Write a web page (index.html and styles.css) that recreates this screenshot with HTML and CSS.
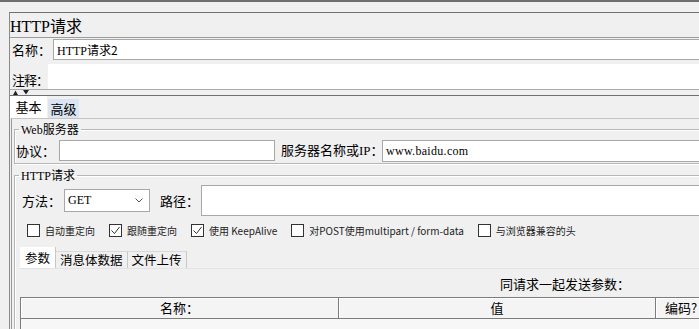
FILE: index.html
```html
<!DOCTYPE html>
<html lang="zh">
<head>
    <meta charset="UTF-8">
    <title>HTTP请求</title>
    <link rel="stylesheet" href="styles.css">
</head>
<body>
<div class="topbar"></div>
<div class="panel">
    <div class="title"><span class="lat">HTTP</span>请求</div>
    <div class="name-row">
        <span class="lbl name-lbl">名称：</span>
        <div class="field name-field"><span class="lat">HTTP</span>请求2</div>
    </div>
    <div class="comment-row">
        <span class="lbl comment-lbl">注释：</span>
        <div class="comment-box"></div>
    </div>
    <div class="splitter">
        <svg width="30" height="5" viewBox="0 0 30 5">
            <polygon points="3,5 5.5,0.5 8,5" fill="#222"/>
            <polygon points="13,0 19,0 16,4.5" fill="#222"/>
        </svg>
    </div>
    <div class="tabs">
        <div class="tab active">基本</div>
        <div class="tab hot">高级</div>
    </div>
    <div class="tab-body">
        <fieldset class="group web">
            <legend><span class="lat">Web</span>服务器</legend>
            <div class="row">
                <span class="lbl proto-lbl">协议：</span>
                <div class="field proto-field"></div>
                <span class="lbl host-lbl">服务器名称或<span class="lat">IP</span>：</span>
                <div class="field host-field">www.baidu.com</div>
            </div>
        </fieldset>
        <fieldset class="group http">
            <legend><span class="lat">HTTP</span>请求</legend>
            <div class="method-row">
                <span class="lbl method-lbl">方法：</span>
                <div class="select">
                    <span>GET</span>
                    <svg width="8" height="5" viewBox="0 0 8 5"><polyline points="0.5,0.5 4,4 7.5,0.5" fill="none" stroke="#555" stroke-width="1"/></svg>
                </div>
                <span class="lbl path-lbl">路径：</span>
                <div class="field path-field"></div>
            </div>
            <div class="checks">
                <div class="check"><span class="box"></span>自动重定向</div>
                <div class="check"><span class="box"><svg width="11" height="11" viewBox="0 0 11 11"><polyline points="1.5,5.5 4.5,8.5 9.5,2" fill="none" stroke="#333" stroke-width="1"/></svg></span>跟随重定向</div>
                <div class="check"><span class="box"><svg width="11" height="11" viewBox="0 0 11 11"><polyline points="1.5,5.5 4.5,8.5 9.5,2" fill="none" stroke="#333" stroke-width="1"/></svg></span>使用 KeepAlive</div>
                <div class="check"><span class="box"></span>对POST使用multipart / form-data</div>
                <div class="check"><span class="box"></span>与浏览器兼容的头</div>
            </div>
            <div class="subtabs">
                <div class="subtab active">参数</div>
                <div class="subtab">消息体数据</div>
                <div class="subtab">文件上传</div>
            </div>
            <div class="subtab-body">
                <div class="caption">同请求一起发送参数：</div>
                <div class="table">
                    <div class="th col-name">名称：</div>
                    <div class="th col-value">值</div>
                    <div class="th col-enc">编码?</div>
                </div>
                <div class="table-body"></div>
            </div>
        </fieldset>
    </div>
</div>
</body>
</html>
```
FILE: styles.css
```css
html, body {
    margin: 0;
    padding: 0;
    overflow: hidden;
    background-color: #f0f0f0;
}

body {
    font-family: "Noto Sans CJK SC", sans-serif;
    font-size: 13px;
    color: #000;
}

.lat {
    font-family: "Liberation Serif", serif;
}

.topbar {
    height: 2px;
    background-color: #6f6f6f;
}

.panel {
    margin: 10px 0 0 9px;
    width: 780px;
    border-top: 1px solid #707070;
    border-left: 1px solid #8a8a8a;
}

.title {
    height: 24px;
    line-height: 24px;
    font-size: 16px;
}

.lbl {
    flex: none;
    line-height: 18px;
    white-space: nowrap;
}

.name-row {
    display: flex;
    align-items: center;
    height: 21px;
    padding: 1px 0 0 2px;
    border-top: 1px solid #9c9c9c;
}

.name-lbl {
    width: 41px;
}

.field {
    background: #fff;
    border: 1px solid #a8a8a8;
    box-sizing: border-box;
    font-size: 12px;
    padding-left: 3px;
}

.name-field {
    flex: 1;
    height: 21px;
    line-height: 19px;
}

.comment-row {
    display: flex;
    align-items: center;
    height: 25px;
    padding: 4px 0 0 2px;
}

.comment-lbl {
    width: 36px;
    padding-top: 6px;
    letter-spacing: -1px;
}

.comment-box {
    flex: 1;
    height: 25px;
    background: #fff;
}

.splitter {
    height: 5px;
    border-top: 1px solid #a9a9a9;
    border-bottom: 1px solid #707070;
}

.splitter svg {
    display: block;
}

.tabs {
    display: flex;
    align-items: flex-end;
    height: 22px;
}

.tab {
    text-align: center;
    line-height: 19px;
}

.tab.active {
    width: 37px;
    height: 22px;
    line-height: 22px;
    background: #fff;
}

.tab.hot {
    width: 31px;
    height: 19px;
    margin-left: 1px;
    background: #d9e5f2;
}

.tab-body {
    margin-left: 1px;
    border-top: 1px solid #c4c4c4;
    border-left: 1px solid #9a9a9a;
    padding: 2px 0 0 2px;
    height: 300px;
}

.group {
    margin: 0;
    padding: 0;
    border: 1px solid #b7b7b7;
    box-shadow: inset 1px 1px 0 #fff, 1px 1px 0 #fff;
    min-width: 0;
}

.group legend {
    margin-left: 4px;
    padding: 0 2px;
    font-size: 12px;
    line-height: 16px;
}

.row {
    display: flex;
    align-items: center;
    height: 21px;
    padding: 2px 0 2px 1px;
}

.proto-lbl {
    width: 43px;
}

.proto-field {
    width: 216px;
    height: 21px;
}

.host-lbl {
    margin-left: 6px;
    width: 101px;
}

.host-field {
    flex: 1;
    height: 22px;
    line-height: 20px;
    font-family: "Liberation Serif", serif;
    letter-spacing: 0.3px;
}

.http {
    margin-top: 3px;
    height: 200px;
}

.method-row {
    display: flex;
    align-items: center;
    height: 31px;
    margin-top: 1px;
    padding-left: 7px;
}

.method-lbl {
    width: 42px;
}

.select {
    display: flex;
    align-items: center;
    justify-content: space-between;
    width: 86px;
    height: 23px;
    box-sizing: border-box;
    padding: 0 6px 0 3px;
    background: #fff;
    border: 1px solid #a8a8a8;
    font-family: "Liberation Serif", serif;
    font-size: 12px;
}

.path-lbl {
    margin-left: 10px;
    width: 41px;
}

.path-field {
    flex: 1;
    height: 31px;
}

.checks {
    display: flex;
    align-items: center;
    height: 13px;
    margin-top: 8px;
    padding-left: 12px;
    font-size: 10px;
    color: #222;
}

.check {
    display: flex;
    align-items: center;
    margin-right: 14px;
    white-space: nowrap;
}

.box {
    width: 13px;
    height: 13px;
    box-sizing: border-box;
    border: 1px solid #333;
    background: #fff;
    margin-right: 5px;
}

.box svg {
    display: block;
}

.subtabs {
    display: flex;
    align-items: flex-end;
    height: 21px;
    margin: 10px 0 0 5px;
    font-size: 12.5px;
}

.subtab {
    height: 16px;
    line-height: 16px;
    padding: 0 4px;
    border-top: 1px solid #d9d9d9;
    border-right: 1px solid #c8c8c8;
    text-align: center;
}

.subtab.active {
    width: 27px;
    height: 21px;
    line-height: 21px;
    border-top: none;
    background: #fff;
}

.subtab-body {
    margin-left: 5px;
    border-top: 1px solid #e3e3e3;
}

.caption {
    margin: 7px 0 0 480px;
    line-height: 16px;
}

.table {
    display: flex;
    margin-top: 5px;
    height: 20px;
    border: 1px solid #7c7c7c;
    border-right: none;
    background: #f4f4f4;
}

.th {
    box-sizing: border-box;
    border-right: 1px solid #7c7c7c;
    box-shadow: inset 1px 1px 0 #fff;
    text-align: center;
    line-height: 20px;
}

.col-name {
    width: 318px;
}

.col-value {
    width: 317px;
}

.col-enc {
    width: 60px;
    text-align: left;
    padding-left: 9px;
}

.table-body {
    height: 40px;
    background: #f7f7f7;
    border-left: 1px solid #7c7c7c;
}
```
